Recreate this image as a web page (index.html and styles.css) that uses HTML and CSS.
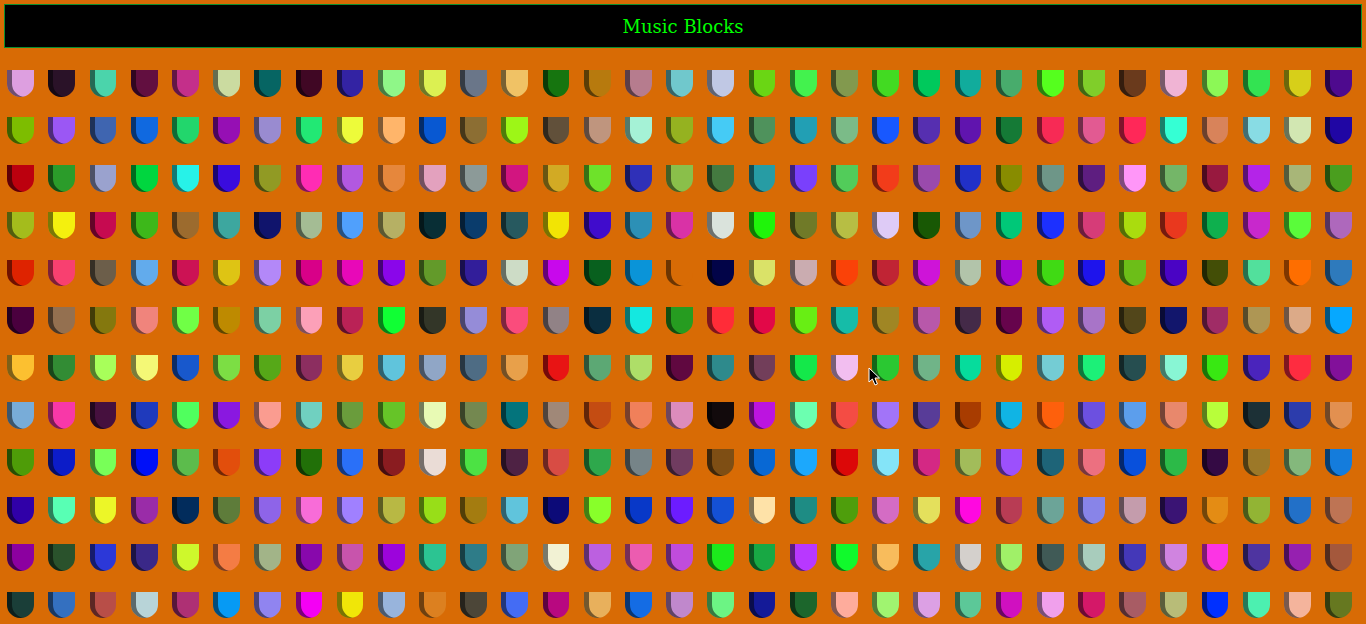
FILE: index.html
```html
<!DOCTYPE html>
<html lang="en">
<head>
<meta charset="utf-8">
<title>Music Blocks</title>
<link rel="stylesheet" href="styles.css">
</head>
<body>
<header class="title">Music Blocks</header>
<main class="grid">
<div class="block" style="background:#DD9FE0"></div><div class="block" style="background:#2A1228"></div><div class="block" style="background:#4BD4AB"></div><div class="block" style="background:#620F40"></div><div class="block" style="background:#C42F8A"></div><div class="block" style="background:#CBDBA0"></div><div class="block" style="background:#066563"></div><div class="block" style="background:#400724"></div><div class="block" style="background:#3323A3"></div><div class="block" style="background:#8FF788"></div><div class="block" style="background:#DCF052"></div><div class="block" style="background:#6A7689"></div><div class="block" style="background:#F0C265"></div><div class="block" style="background:#16750F"></div><div class="block" style="background:#B77A0E"></div><div class="block" style="background:#B67C8E"></div><div class="block" style="background:#70C8CC"></div><div class="block" style="background:#C0C8E4"></div><div class="block" style="background:#6AD614"></div><div class="block" style="background:#43F24E"></div><div class="block" style="background:#82994E"></div><div class="block" style="background:#42DA22"></div><div class="block" style="background:#00C95C"></div><div class="block" style="background:#11AC9C"></div><div class="block" style="background:#48AC6C"></div><div class="block" style="background:#55FF1E"></div><div class="block" style="background:#80CE2A"></div><div class="block" style="background:#6A3A1C"></div><div class="block" style="background:#F0B4D4"></div><div class="block" style="background:#8CF856"></div><div class="block" style="background:#33E352"></div><div class="block" style="background:#D7CF19"></div><div class="block" style="background:#4E0A8E"></div>
<div class="block" style="background:#7DBD00"></div><div class="block" style="background:#9B57F4"></div><div class="block" style="background:#3F65B0"></div><div class="block" style="background:#1069E0"></div><div class="block" style="background:#22D66C"></div><div class="block" style="background:#960FB4"></div><div class="block" style="background:#998BD0"></div><div class="block" style="background:#22E874"></div><div class="block" style="background:#EDFB3A"></div><div class="block" style="background:#FFB56A"></div><div class="block" style="background:#0858D2"></div><div class="block" style="background:#8C6E33"></div><div class="block" style="background:#9DF617"></div><div class="block" style="background:#61503A"></div><div class="block" style="background:#BF957E"></div><div class="block" style="background:#A5F2D6"></div><div class="block" style="background:#95B220"></div><div class="block" style="background:#45CBF5"></div><div class="block" style="background:#4F925C"></div><div class="block" style="background:#229FB4"></div><div class="block" style="background:#7BBB88"></div><div class="block" style="background:#1858FF"></div><div class="block" style="background:#562FB0"></div><div class="block" style="background:#6014AE"></div><div class="block" style="background:#157A36"></div><div class="block" style="background:#F72A55"></div><div class="block" style="background:#E25A92"></div><div class="block" style="background:#FF2858"></div><div class="block" style="background:#35FFD4"></div><div class="block" style="background:#D8835A"></div><div class="block" style="background:#88DCE4"></div><div class="block" style="background:#D2E7B2"></div><div class="block" style="background:#2006A4"></div>
<div class="block" style="background:#BC000E"></div><div class="block" style="background:#2B9C2A"></div><div class="block" style="background:#9AA2CE"></div><div class="block" style="background:#00D63F"></div><div class="block" style="background:#27F2E8"></div><div class="block" style="background:#3A0CDE"></div><div class="block" style="background:#919A24"></div><div class="block" style="background:#FF2CB4"></div><div class="block" style="background:#B258E0"></div><div class="block" style="background:#E6873C"></div><div class="block" style="background:#E3A1BE"></div><div class="block" style="background:#8C9A98"></div><div class="block" style="background:#D21580"></div><div class="block" style="background:#D2AA24"></div><div class="block" style="background:#6EE22A"></div><div class="block" style="background:#2F30B8"></div><div class="block" style="background:#8ABF4A"></div><div class="block" style="background:#447A40"></div><div class="block" style="background:#279CA4"></div><div class="block" style="background:#7A40FC"></div><div class="block" style="background:#52CC5A"></div><div class="block" style="background:#F23C1A"></div><div class="block" style="background:#9A4AAC"></div><div class="block" style="background:#2130C8"></div><div class="block" style="background:#888C00"></div><div class="block" style="background:#6E9688"></div><div class="block" style="background:#5E1E80"></div><div class="block" style="background:#FF96F8"></div><div class="block" style="background:#74B668"></div><div class="block" style="background:#98193F"></div><div class="block" style="background:#B424E8"></div><div class="block" style="background:#A8B678"></div><div class="block" style="background:#4A9E1E"></div>
<div class="block" style="background:#A4BC1C"></div><div class="block" style="background:#F4F00E"></div><div class="block" style="background:#C60A50"></div><div class="block" style="background:#3DB81A"></div><div class="block" style="background:#9C6B2E"></div><div class="block" style="background:#3DA79F"></div><div class="block" style="background:#10146C"></div><div class="block" style="background:#A4BC94"></div><div class="block" style="background:#50A0FC"></div><div class="block" style="background:#B6B064"></div><div class="block" style="background:#082E35"></div><div class="block" style="background:#0A3C6C"></div><div class="block" style="background:#27595F"></div><div class="block" style="background:#F2E404"></div><div class="block" style="background:#400CCC"></div><div class="block" style="background:#2C90B6"></div><div class="block" style="background:#D932A6"></div><div class="block" style="background:#DAE3DC"></div><div class="block" style="background:#1FF40A"></div><div class="block" style="background:#707A28"></div><div class="block" style="background:#B7BE44"></div><div class="block" style="background:#DECBF6"></div><div class="block" style="background:#185804"></div><div class="block" style="background:#6E96C8"></div><div class="block" style="background:#00C878"></div><div class="block" style="background:#1C30FF"></div><div class="block" style="background:#D63C78"></div><div class="block" style="background:#AADC0E"></div><div class="block" style="background:#E9381E"></div><div class="block" style="background:#0EB04E"></div><div class="block" style="background:#C828CC"></div><div class="block" style="background:#5AFC3A"></div><div class="block" style="background:#AE68BC"></div>
<div class="block" style="background:#DE2300"></div><div class="block" style="background:#F84070"></div><div class="block" style="background:#6C5E4A"></div><div class="block" style="background:#62ABEC"></div><div class="block" style="background:#CC1254"></div><div class="block" style="background:#DEC414"></div><div class="block" style="background:#B388F8"></div><div class="block" style="background:#D80088"></div><div class="block" style="background:#E808B8"></div><div class="block" style="background:#8A06EA"></div><div class="block" style="background:#639A2A"></div><div class="block" style="background:#321E9A"></div><div class="block" style="background:#CDDCC6"></div><div class="block" style="background:#C808EC"></div><div class="block" style="background:#08601E"></div><div class="block" style="background:#0A94D8"></div><div class="block" style="background:#D86B05"></div><div class="block" style="background:#020448"></div><div class="block" style="background:#DAE268"></div><div class="block" style="background:#CAACB0"></div><div class="block" style="background:#FA4208"></div><div class="block" style="background:#C02434"></div><div class="block" style="background:#CE14D8"></div><div class="block" style="background:#B2C4AA"></div><div class="block" style="background:#A408D4"></div><div class="block" style="background:#40DA14"></div><div class="block" style="background:#1E14EC"></div><div class="block" style="background:#6CBE18"></div><div class="block" style="background:#4A04C4"></div><div class="block" style="background:#434E06"></div><div class="block" style="background:#52E09C"></div><div class="block" style="background:#FE6E00"></div><div class="block" style="background:#2E7ABC"></div>
<div class="block" style="background:#4A003E"></div><div class="block" style="background:#947050"></div><div class="block" style="background:#84780E"></div><div class="block" style="background:#F0847C"></div><div class="block" style="background:#70FF46"></div><div class="block" style="background:#BE8A00"></div><div class="block" style="background:#7CD0A4"></div><div class="block" style="background:#FCA0B8"></div><div class="block" style="background:#BA2256"></div><div class="block" style="background:#10FF34"></div><div class="block" style="background:#333628"></div><div class="block" style="background:#958CD8"></div><div class="block" style="background:#FA4C7C"></div><div class="block" style="background:#918286"></div><div class="block" style="background:#0A2E40"></div><div class="block" style="background:#14E8E0"></div><div class="block" style="background:#269C20"></div><div class="block" style="background:#FF2C38"></div><div class="block" style="background:#E20848"></div><div class="block" style="background:#68EE14"></div><div class="block" style="background:#16BCA8"></div><div class="block" style="background:#A08624"></div><div class="block" style="background:#B858AA"></div><div class="block" style="background:#442A48"></div><div class="block" style="background:#66044C"></div><div class="block" style="background:#B05CF4"></div><div class="block" style="background:#A874C8"></div><div class="block" style="background:#52461A"></div><div class="block" style="background:#12166C"></div><div class="block" style="background:#A02C66"></div><div class="block" style="background:#AE9654"></div><div class="block" style="background:#DCAA88"></div><div class="block" style="background:#06A8FF"></div>
<div class="block" style="background:#FCC030"></div><div class="block" style="background:#328C34"></div><div class="block" style="background:#A8FF5A"></div><div class="block" style="background:#F4F876"></div><div class="block" style="background:#1858CC"></div><div class="block" style="background:#7CDE44"></div><div class="block" style="background:#56A818"></div><div class="block" style="background:#8C2E60"></div><div class="block" style="background:#E8CE40"></div><div class="block" style="background:#60C4DC"></div><div class="block" style="background:#90A6C6"></div><div class="block" style="background:#4E6C84"></div><div class="block" style="background:#E8A04A"></div><div class="block" style="background:#E81414"></div><div class="block" style="background:#5CA874"></div><div class="block" style="background:#AEDE68"></div><div class="block" style="background:#600840"></div><div class="block" style="background:#2E8A8C"></div><div class="block" style="background:#723E5A"></div><div class="block" style="background:#14E84A"></div><div class="block" style="background:#F2BEF0"></div><div class="block" style="background:#2AC832"></div><div class="block" style="background:#70B488"></div><div class="block" style="background:#06DC9C"></div><div class="block" style="background:#D6EE00"></div><div class="block" style="background:#74CCD4"></div><div class="block" style="background:#1CF078"></div><div class="block" style="background:#264E50"></div><div class="block" style="background:#88F6D4"></div><div class="block" style="background:#38E812"></div><div class="block" style="background:#4A24BC"></div><div class="block" style="background:#FE2C40"></div><div class="block" style="background:#82109A"></div>
<div class="block" style="background:#78ACD8"></div><div class="block" style="background:#F838A8"></div><div class="block" style="background:#46103E"></div><div class="block" style="background:#1F3ABC"></div><div class="block" style="background:#50FF5E"></div><div class="block" style="background:#8A18E0"></div><div class="block" style="background:#FA9C90"></div><div class="block" style="background:#70D0C0"></div><div class="block" style="background:#6A9C3C"></div><div class="block" style="background:#66C428"></div><div class="block" style="background:#E8FAB4"></div><div class="block" style="background:#748850"></div><div class="block" style="background:#04747C"></div><div class="block" style="background:#A08878"></div><div class="block" style="background:#C44C12"></div><div class="block" style="background:#F0805A"></div><div class="block" style="background:#DC8CBC"></div><div class="block" style="background:#120A0C"></div><div class="block" style="background:#BC14E0"></div><div class="block" style="background:#6CFFB0"></div><div class="block" style="background:#F44C44"></div><div class="block" style="background:#A274F8"></div><div class="block" style="background:#583C98"></div><div class="block" style="background:#A83C00"></div><div class="block" style="background:#10B4E4"></div><div class="block" style="background:#FE600C"></div><div class="block" style="background:#6C50E0"></div><div class="block" style="background:#5C9EEC"></div><div class="block" style="background:#E8886C"></div><div class="block" style="background:#B8FE3A"></div><div class="block" style="background:#1C3036"></div><div class="block" style="background:#2C3CAC"></div><div class="block" style="background:#E29050"></div>
<div class="block" style="background:#4E9C08"></div><div class="block" style="background:#0C1CC8"></div><div class="block" style="background:#78FF58"></div><div class="block" style="background:#0010F8"></div><div class="block" style="background:#5CBC4C"></div><div class="block" style="background:#E24E0C"></div><div class="block" style="background:#8C3CF8"></div><div class="block" style="background:#217008"></div><div class="block" style="background:#2A70F8"></div><div class="block" style="background:#8A1C20"></div><div class="block" style="background:#EADCD6"></div><div class="block" style="background:#4CE244"></div><div class="block" style="background:#4E2244"></div><div class="block" style="background:#D84C44"></div><div class="block" style="background:#2EA84C"></div><div class="block" style="background:#768488"></div><div class="block" style="background:#703C60"></div><div class="block" style="background:#7E4E14"></div><div class="block" style="background:#0868D4"></div><div class="block" style="background:#1CA8FC"></div><div class="block" style="background:#DC0808"></div><div class="block" style="background:#84E4F8"></div><div class="block" style="background:#D42884"></div><div class="block" style="background:#A2BC5A"></div><div class="block" style="background:#9C50FC"></div><div class="block" style="background:#1E6478"></div><div class="block" style="background:#EC7080"></div><div class="block" style="background:#0850DC"></div><div class="block" style="background:#2CBA48"></div><div class="block" style="background:#340A44"></div><div class="block" style="background:#9C7828"></div><div class="block" style="background:#84B87C"></div><div class="block" style="background:#147CDC"></div>
<div class="block" style="background:#3000A8"></div><div class="block" style="background:#58FFB4"></div><div class="block" style="background:#ECF628"></div><div class="block" style="background:#9A2CA8"></div><div class="block" style="background:#022C5C"></div><div class="block" style="background:#5E7C3A"></div><div class="block" style="background:#8E64E8"></div><div class="block" style="background:#F86CD8"></div><div class="block" style="background:#A080FF"></div><div class="block" style="background:#B8B844"></div><div class="block" style="background:#98DE18"></div><div class="block" style="background:#A47C10"></div><div class="block" style="background:#60C4DC"></div><div class="block" style="background:#0C0A78"></div><div class="block" style="background:#88FF2A"></div><div class="block" style="background:#0838C8"></div><div class="block" style="background:#6C1CFF"></div><div class="block" style="background:#1450D4"></div><div class="block" style="background:#FEE2A8"></div><div class="block" style="background:#1E8C84"></div><div class="block" style="background:#4E9E0C"></div><div class="block" style="background:#D46CC4"></div><div class="block" style="background:#E4E05C"></div><div class="block" style="background:#FF08E0"></div><div class="block" style="background:#B83C54"></div><div class="block" style="background:#6CA498"></div><div class="block" style="background:#8884E8"></div><div class="block" style="background:#C49CAC"></div><div class="block" style="background:#3A1474"></div><div class="block" style="background:#E48C14"></div><div class="block" style="background:#92B434"></div><div class="block" style="background:#2270C8"></div><div class="block" style="background:#BE7454"></div>
<div class="block" style="background:#8C00A0"></div><div class="block" style="background:#2A522C"></div><div class="block" style="background:#2C38D8"></div><div class="block" style="background:#3A2888"></div><div class="block" style="background:#CEF82C"></div><div class="block" style="background:#F47C44"></div><div class="block" style="background:#A2B488"></div><div class="block" style="background:#8808AC"></div><div class="block" style="background:#C854AC"></div><div class="block" style="background:#9C04DC"></div><div class="block" style="background:#2CC492"></div><div class="block" style="background:#2E7C88"></div><div class="block" style="background:#80A478"></div><div class="block" style="background:#F2F2D4"></div><div class="block" style="background:#BC60E0"></div><div class="block" style="background:#EC5CB0"></div><div class="block" style="background:#C04CDC"></div><div class="block" style="background:#1CEA1C"></div><div class="block" style="background:#18A844"></div><div class="block" style="background:#B838FF"></div><div class="block" style="background:#10FA2C"></div><div class="block" style="background:#F8BC5C"></div><div class="block" style="background:#28A4A8"></div><div class="block" style="background:#D4D0CC"></div><div class="block" style="background:#A0F068"></div><div class="block" style="background:#405A56"></div><div class="block" style="background:#A8CCBC"></div><div class="block" style="background:#4438B8"></div><div class="block" style="background:#D084E0"></div><div class="block" style="background:#FC34E4"></div><div class="block" style="background:#4E34A0"></div><div class="block" style="background:#9620B0"></div><div class="block" style="background:#A4583C"></div>
<div class="block" style="background:#1A3E38"></div><div class="block" style="background:#3470C0"></div><div class="block" style="background:#B84E48"></div><div class="block" style="background:#B8D4D8"></div><div class="block" style="background:#AE3074"></div><div class="block" style="background:#069AF4"></div><div class="block" style="background:#9084F0"></div><div class="block" style="background:#F400F4"></div><div class="block" style="background:#F0E608"></div><div class="block" style="background:#98B4DC"></div><div class="block" style="background:#DC8020"></div><div class="block" style="background:#4C4638"></div><div class="block" style="background:#446CF4"></div><div class="block" style="background:#B80880"></div><div class="block" style="background:#E8B05C"></div><div class="block" style="background:#146CE4"></div><div class="block" style="background:#C088CC"></div><div class="block" style="background:#6CF484"></div><div class="block" style="background:#141A98"></div><div class="block" style="background:#1C662C"></div><div class="block" style="background:#FEAC9C"></div><div class="block" style="background:#A0F470"></div><div class="block" style="background:#DCA0E4"></div><div class="block" style="background:#5CC898"></div><div class="block" style="background:#D010C0"></div><div class="block" style="background:#F0A0EC"></div><div class="block" style="background:#D41868"></div><div class="block" style="background:#A85C64"></div><div class="block" style="background:#B8BC78"></div><div class="block" style="background:#0030FF"></div><div class="block" style="background:#4CF0B0"></div><div class="block" style="background:#F4B49C"></div><div class="block" style="background:#667820"></div>
</main>
<svg class="cursor" width="14" height="20" viewBox="0 0 14 20" aria-hidden="true"><path d="M1 1 L1 15 L4.4 12 L7 18 L9.4 17 L7 11 L11.5 11 Z" fill="#000" stroke="#fff" stroke-width="1"/></svg>
</body>
</html>
```
FILE: styles.css
```css
html, body {
  margin: 0;
  padding: 0;
  height: 624px;
  overflow: hidden;
}

body {
  position: relative;
  background: #d86b05;
}

.title {
  box-sizing: border-box;
  height: 44px;
  margin: 4px 4px 0;
  border: 1px solid #0a8f2f;
  background: #000;
  color: #00ff00;
  font-family: "DejaVu Serif", serif;
  font-size: 18px;
  line-height: 44px;
  text-align: center;
}

.grid {
  display: grid;
  grid-template-columns: repeat(33, 26.8px);
  grid-auto-rows: 26.7px;
  column-gap: 14.4px;
  row-gap: 20.75px;
  padding: 21.95px 0 0 7.2px;
}

.block {
  border-radius: 0 0 50% 50%;
  box-shadow: inset 5px 0 0 rgba(0, 0, 0, 0.5);
}

.cursor {
  position: absolute;
  left: 868px;
  top: 367px;
}
```
